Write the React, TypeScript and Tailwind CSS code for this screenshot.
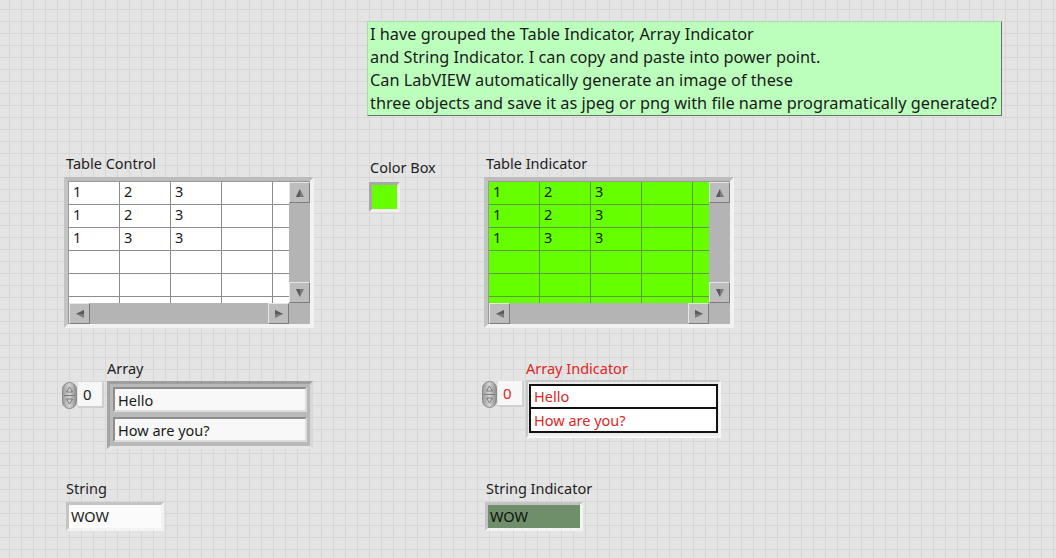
import React from "react";

const font = { fontFamily: '"Noto Sans", "Open Sans", sans-serif' };

function UpArrow() {
  return (
    <svg width="10" height="10" viewBox="0 0 10 10">
      <path d="M5 1 L9 9 L1 9 Z" fill="#7a7a7a" />
      <path d="M5 1 L5 9 L1 9 Z" fill="#5a5a5a" />
    </svg>
  );
}
function DownArrow() {
  return (
    <svg width="10" height="10" viewBox="0 0 10 10">
      <path d="M1 1 L9 1 L5 9 Z" fill="#7a7a7a" />
      <path d="M1 1 L5 1 L5 9 Z" fill="#5a5a5a" />
    </svg>
  );
}
function LeftArrow() {
  return (
    <svg width="10" height="10" viewBox="0 0 10 10">
      <path d="M1 5 L9 1 L9 9 Z" fill="#7a7a7a" />
      <path d="M1 5 L9 1 L9 5 Z" fill="#5a5a5a" />
    </svg>
  );
}
function RightArrow() {
  return (
    <svg width="10" height="10" viewBox="0 0 10 10">
      <path d="M9 5 L1 1 L1 9 Z" fill="#7a7a7a" />
      <path d="M9 5 L1 1 L1 5 Z" fill="#5a5a5a" />
    </svg>
  );
}

function ScrollBtn({ children }: { children: React.ReactNode }) {
  return (
    <div className="w-[21px] h-[21px] flex items-center justify-center bg-[#bdbdbd] border border-t-[#e6e6e6] border-l-[#e6e6e6] border-r-[#7d7d7d] border-b-[#7d7d7d]">
      {children}
    </div>
  );
}

function Table({ green }: { green?: boolean }) {
  const rows = [
    ["1", "2", "3", "", ""],
    ["1", "2", "3", "", ""],
    ["1", "3", "3", "", ""],
    ["", "", "", "", ""],
    ["", "", "", "", ""],
    ["", "", "", "", ""],
  ];
  const cellBg = green ? "bg-[#66ff00]" : "bg-white";
  const line = green ? "border-[#5f9a3c]" : "border-[#8c8c8c]";
  return (
    <div className="w-[250px] h-[151px] border-4 border-t-[#bcbcbc] border-l-[#c4c4c4] border-r-[#f2f2f2] border-b-[#f2f2f2] flex flex-col">
      <div className="flex h-[122px]">
        <div className={`w-[221px] h-[122px] overflow-hidden border-l border-t border-[#9a9a9a] ${cellBg}`}>
          {rows.map((r, i) => (
            <div key={i} className="flex">
              {r.map((c, j) => (
                <div
                  key={j}
                  className={`${j < 4 ? "w-[51px] border-r" : "w-[18px]"} h-[23px] shrink-0 border-b ${line} pl-[4px] text-[14.5px] leading-[18px] text-[#1a1a1a]`}
                >
                  {c}
                </div>
              ))}
            </div>
          ))}
        </div>
        <div className="w-[21px] h-[122px] bg-[#b4b4b4] flex flex-col justify-between border-t border-[#9a9a9a]">
          <ScrollBtn>
            <UpArrow />
          </ScrollBtn>
          <ScrollBtn>
            <DownArrow />
          </ScrollBtn>
        </div>
      </div>
      <div className="flex h-[21px] bg-[#b4b4b4]">
        <div className="w-[221px] flex justify-between border-l border-[#9a9a9a]">
          <ScrollBtn>
            <LeftArrow />
          </ScrollBtn>
          <ScrollBtn>
            <RightArrow />
          </ScrollBtn>
        </div>
        <div className="w-[21px]" />
      </div>
    </div>
  );
}

function Spinner() {
  return (
    <svg width="15" height="27" viewBox="0 0 15 27">
      <defs>
        <linearGradient id="sg" x1="0" x2="1" y1="0" y2="0">
          <stop offset="0" stopColor="#9a9a9a" />
          <stop offset="0.5" stopColor="#d4d4d4" />
          <stop offset="1" stopColor="#8a8a8a" />
        </linearGradient>
      </defs>
      <rect x="0.5" y="0.5" width="14" height="26" rx="7" fill="url(#sg)" stroke="#8a8a8a" />
      <line x1="2" y1="13.5" x2="13" y2="13.5" stroke="#7a7a7a" />
      <path d="M7.5 5 L10.5 10 L4.5 10 Z" fill="none" stroke="#6a6a6a" strokeWidth="0.8" />
      <path d="M4.5 17 L10.5 17 L7.5 22 Z" fill="none" stroke="#6a6a6a" strokeWidth="0.8" />
    </svg>
  );
}

function IndexBox({ red }: { red?: boolean }) {
  return (
    <div className="flex items-start gap-[1px]">
      <Spinner />
      <div
        className={`w-[26px] h-[26px] bg-[#f7f7f7] border-r-2 border-b-2 border-[#d0d0d0] pl-[5px] text-[15px] leading-[25px] ${red ? "text-[#e0261e]" : "text-[#1a1a1a]"}`}
      >
        0
      </div>
    </div>
  );
}

function Label({ children, red }: { children: React.ReactNode; red?: boolean }) {
  return (
    <div className={`text-[14.5px] leading-[18px] ${red ? "text-[#e0261e]" : "text-[#1e1e1e]"}`}>{children}</div>
  );
}

export default function App() {
  return (
    <div
      style={font}
      className="relative w-[1056px] h-[558px] overflow-hidden bg-[#e4e4e4] bg-[linear-gradient(to_right,#d7d7d7_1px,transparent_1px),linear-gradient(to_bottom,#d7d7d7_1px,transparent_1px)] bg-[size:12px_12px] bg-[position:9px_9px]"
    >
      {/* Comment */}
      <div className="absolute left-[367px] top-[21px] w-[635px] h-[95px] bg-[#bcffbc] border border-t-[#a9dca9] border-l-[#a9dca9] border-r-[#6e6e6e] border-b-[#6e6e6e] pl-[2px] pt-[1px] text-[16.3px] leading-[23px] text-[#1a1a1a] whitespace-nowrap">
        <div>I have grouped the Table Indicator, Array Indicator</div>
        <div>and String Indicator. I can copy and paste into power point.</div>
        <div>Can LabVIEW automatically generate an image of these</div>
        <div>three objects and save it as jpeg or png with file name programatically generated?</div>
      </div>

      {/* Table Control */}
      <div className="absolute left-[64px] top-[154px] flex flex-col gap-[5px]">
        <div className="pl-[2px]">
          <Label>Table Control</Label>
        </div>
        <Table />
      </div>

      {/* Color Box */}
      <div className="absolute left-[369px] top-[158px] flex flex-col gap-[6px]">
        <div className="pl-[1px]">
          <Label>Color Box</Label>
        </div>
        <div className="w-[31px] h-[30px] bg-[#66ff00] border-[3px] border-t-[#a8a8a8] border-l-[#a8a8a8] border-r-[#f0f0f0] border-b-[#f0f0f0]" />
      </div>

      {/* Table Indicator */}
      <div className="absolute left-[484px] top-[154px] flex flex-col gap-[5px]">
        <div className="pl-[2px]">
          <Label>Table Indicator</Label>
        </div>
        <Table green />
      </div>

      {/* Array */}
      <div className="absolute left-[62px] top-[359px] flex flex-col gap-[4px]">
        <div className="pl-[45px]">
          <Label>Array</Label>
        </div>
        <div className="flex items-start gap-[3px]">
          <div className="pt-[1px]">
            <IndexBox />
          </div>
          <div className="w-[206px] h-[68px] bg-[#b9b9b9] border-[3px] border-t-[#9e9e9e] border-l-[#a4a4a4] border-r-[#d8d8d8] border-b-[#e6e6e6] p-[3px] flex flex-col gap-[5px]">
            {["Hello", "How are you?"].map((t) => (
              <div
                key={t}
                className="h-[25px] bg-[#f8f8f8] border-2 border-t-[#8e8e8e] border-l-[#8e8e8e] border-r-[#dcdcdc] border-b-[#dcdcdc] pl-[3px] text-[14.5px] leading-[23px] text-[#1a1a1a]"
              >
                {t}
              </div>
            ))}
          </div>
        </div>
      </div>

      {/* Array Indicator */}
      <div className="absolute left-[482px] top-[359px] flex flex-col gap-[3px]">
        <div className="pl-[44px]">
          <Label red>Array Indicator</Label>
        </div>
        <div className="flex items-start gap-[2px]">
          <div className="pt-[1px]">
            <IndexBox red />
          </div>
          <div className="w-[195px] h-[58px] bg-[#ececec] border-2 border-t-[#c8c8c8] border-l-[#c8c8c8] border-r-[#f6f6f6] border-b-[#f6f6f6] px-[1px] pt-[2px]">
            <div className="border-2 border-[#111] bg-white">
              <div className="h-[23px] pl-[3px] text-[14.5px] leading-[21px] text-[#e0261e] border-b-2 border-[#111]">Hello</div>
              <div className="h-[22px] pl-[3px] text-[14.5px] leading-[22px] text-[#e0261e]">How are you?</div>
            </div>
          </div>
        </div>
      </div>

      {/* String */}
      <div className="absolute left-[66px] top-[479px] flex flex-col gap-[5px]">
        <Label>String</Label>
        <div className="w-[98px] h-[29px] bg-[#fbfbfb] border-[3px] border-t-[#c4c4c4] border-l-[#c4c4c4] border-r-[#f3f3f3] border-b-[#f3f3f3] pl-[2px] text-[14.5px] leading-[22px] text-[#1a1a1a]">
          WOW
        </div>
      </div>

      {/* String Indicator */}
      <div className="absolute left-[485px] top-[479px] flex flex-col gap-[5px]">
        <div className="pl-[1px]">
          <Label>String Indicator</Label>
        </div>
        <div className="w-[98px] h-[29px] bg-[#6f8f6b] border-[3px] border-t-[#c4c4c4] border-l-[#c4c4c4] border-r-[#f3f3f3] border-b-[#f3f3f3] pl-[2px] text-[14.5px] leading-[22px] text-[#111]">
          WOW
        </div>
      </div>
    </div>
  );
}
